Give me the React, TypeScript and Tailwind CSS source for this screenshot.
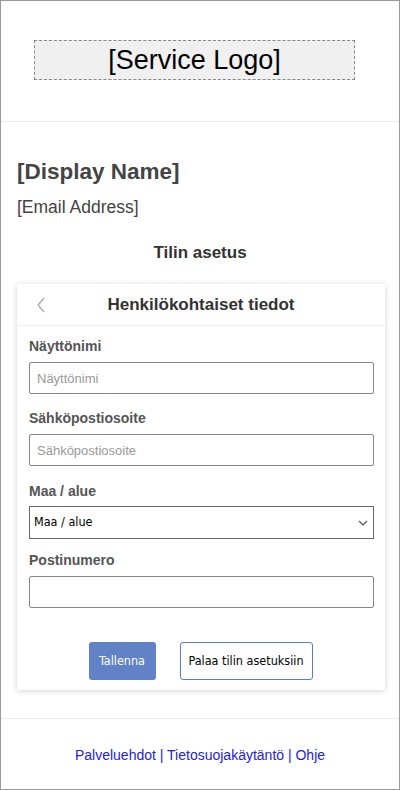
const FIELDS = [
  { label: "Näyttönimi", placeholder: "Näyttönimi" },
  { label: "Sähköpostiosoite", placeholder: "Sähköpostiosoite" },
];

const FOOTER_LINKS = ["Palveluehdot", "Tietosuojakäytäntö", "Ohje"];

function Label({ children }: { children: React.ReactNode }) {
  return <div className="text-[14px] font-bold leading-[18px] text-[#555]">{children}</div>;
}

export default function App() {
  return (
    <div className="h-[790px] w-[400px] border border-[#9a9a9a] bg-white font-['Liberation_Sans',Arial,sans-serif] text-[#333]">
      <header className="h-[121px] border-b border-[#ececec] pt-[39px]">
        <div className="ml-[33px] flex h-[40px] w-[321px] items-center justify-center border border-dashed border-[#888] bg-[#f0f0f0] text-[27px] text-black">
          [Service Logo]
        </div>
      </header>

      <main className="px-4 pt-[36px]">
        <h1 className="text-[22.5px] font-bold leading-[28px] text-[#444]">[Display Name]</h1>
        <p className="mt-[10px] text-[17.5px] leading-[22px] text-[#444]">[Email Address]</p>
        <h2 className="mt-[25px] text-center text-[17px] font-bold leading-[20px] text-[#333]">Tilin asetus</h2>

        <section className="mt-[21px] w-[368px] bg-white shadow-[0_1px_6px_rgba(0,0,0,0.18)]">
          <div className="relative flex h-[42px] items-center justify-center border-b border-[#eee]">
            <svg className="absolute left-[19px] top-[12px]" width="10" height="18" viewBox="0 0 10 18" fill="none">
              <path d="M8 2L2 9l6 7" stroke="#aaa" strokeWidth="1.3" />
            </svg>
            <span className="text-[17px] font-bold text-[#333]">Henkilökohtaiset tiedot</span>
          </div>

          <div className="pl-3 pr-[11px] pt-[11px] pb-[10px]">
            {FIELDS.map((f, i) => (
              <div key={f.label} className={i === 0 ? "mb-[15px]" : "mb-[16px]"}>
                <Label>{f.label}</Label>
                <input
                  placeholder={f.placeholder}
                  className="mt-[7px] h-[32px] w-full rounded-[2px] border border-[#888] px-[7px] font-['Liberation_Sans',Arial,sans-serif] text-[13px] text-[#333] placeholder:text-[#999]"
                />
              </div>
            ))}

            <div className="mb-[12px]">
              <Label>Maa / alue</Label>
              <div className="relative mt-[6px]">
                <select className="h-[33px] w-full appearance-none border border-[#666] bg-white pl-[4px] font-['DejaVu_Sans_Condensed','DejaVu_Sans',sans-serif] text-[12.5px] text-black">
                  <option>Maa / alue</option>
                </select>
                <svg className="pointer-events-none absolute right-[6px] top-[14px]" width="10" height="6" viewBox="0 0 10 6" fill="none">
                  <path d="M1 1l4 4 4-4" stroke="#555" strokeWidth="1.2" />
                </svg>
              </div>
            </div>

            <div>
              <Label>Postinumero</Label>
              <input className="mt-[7px] h-[32px] w-full rounded-[2px] border border-[#888] px-[7px] text-[13px]" />
            </div>

            <div className="mt-[34px] flex justify-center gap-[24px] pr-[2px]">
              <button className="h-[38px] w-[67px] rounded-[3px] bg-[#6182c6] font-['DejaVu_Sans_Condensed','DejaVu_Sans',sans-serif] text-[12.5px] text-white">
                Tallenna
              </button>
              <button className="h-[38px] w-[133px] rounded-[3px] border border-[#5a7cc4] bg-white font-['DejaVu_Sans_Condensed','DejaVu_Sans',sans-serif] text-[12.5px] text-black">
                Palaa tilin asetuksiin
              </button>
            </div>
          </div>
        </section>
      </main>

      <footer className="mt-[28px] border-t border-[#ececec] pt-[26px] text-center text-[14px] text-[#2222dd]">
        {FOOTER_LINKS.map((l, i) => (
          <span key={l}>
            {i > 0 && " | "}
            <a href="#">{l}</a>
          </span>
        ))}
      </footer>
    </div>
  );
}
